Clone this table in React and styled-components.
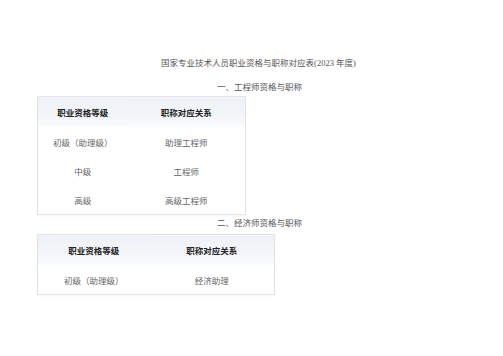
import React from 'react'
import styled, { createGlobalStyle } from 'styled-components'

const GlobalStyle = createGlobalStyle`
  html, body {
    margin: 0;
    padding: 0;
    background: #fff;
  }
  body {
    font-family: "Liberation Serif", "Noto Sans CJK SC", serif;
  }
`

const Page = styled.div`
  width: 503px;
  height: 356px;
  padding-top: 56px;
  box-sizing: border-box;
`

const Title = styled.div`
  padding-left: 14px;
  text-align: center;
  font-size: 8.5px;
  line-height: 14px;
  color: #555;
`

const Section = styled.div`
  padding-left: 16px;
  margin-top: ${p => p.gap}px;
  text-align: center;
  font-size: 8.5px;
  line-height: 12px;
  color: #555;
`

const Table = styled.table`
  margin: ${p => p.top}px 0 0 37px;
  width: ${p => p.width}px;
  border-collapse: collapse;
  border: 1px solid #e2e4e8;
  box-shadow: 0 1px 2px rgba(0, 0, 0, 0.04);
  font-family: "Noto Sans CJK SC", sans-serif;
  font-size: 8.5px;
  table-layout: fixed;
`

const HeadCell = styled.th`
  height: 30px;
  padding: 0;
  font-weight: 700;
  color: #222;
  text-align: center;
  background: linear-gradient(#edf1f6, #f4f6f9 70%, #fbfcfd);
`

const Cell = styled.td`
  height: 29px;
  padding: 0;
  color: #666;
  text-align: center;
  font-family: "Liberation Serif", "Noto Sans CJK SC", serif;
`

function GradeTable ({ top, width, cols, rows }) {
  return (
    <Table top={top} width={width}>
      <colgroup>
        <col style={{ width: cols[0] }} />
        <col />
      </colgroup>
      <thead>
        <tr>
          <HeadCell>职业资格等级</HeadCell>
          <HeadCell>职称对应关系</HeadCell>
        </tr>
      </thead>
      <tbody>
        {rows.map(([grade, title]) => (
          <tr key={grade}>
            <Cell>{grade}</Cell>
            <Cell>{title}</Cell>
          </tr>
        ))}
      </tbody>
    </Table>
  )
}

export default function App () {
  return (
    <Page>
      <GlobalStyle />
      <Title>国家专业技术人员职业资格与职称对应表(2023 年度)</Title>
      <Section gap={11}>一、工程师资格与职称</Section>
      <GradeTable
        top={3}
        width={209}
        cols={[90]}
        rows={[
          ['初级（助理级）', '助理工程师'],
          ['中级', '工程师'],
          ['高级', '高级工程师'],
        ]}
      />
      <Section gap={2}>二、经济师资格与职称</Section>
      <GradeTable
        top={5}
        width={238}
        cols={[112]}
        rows={[['初级（助理级）', '经济助理']]}
      />
    </Page>
  )
}
